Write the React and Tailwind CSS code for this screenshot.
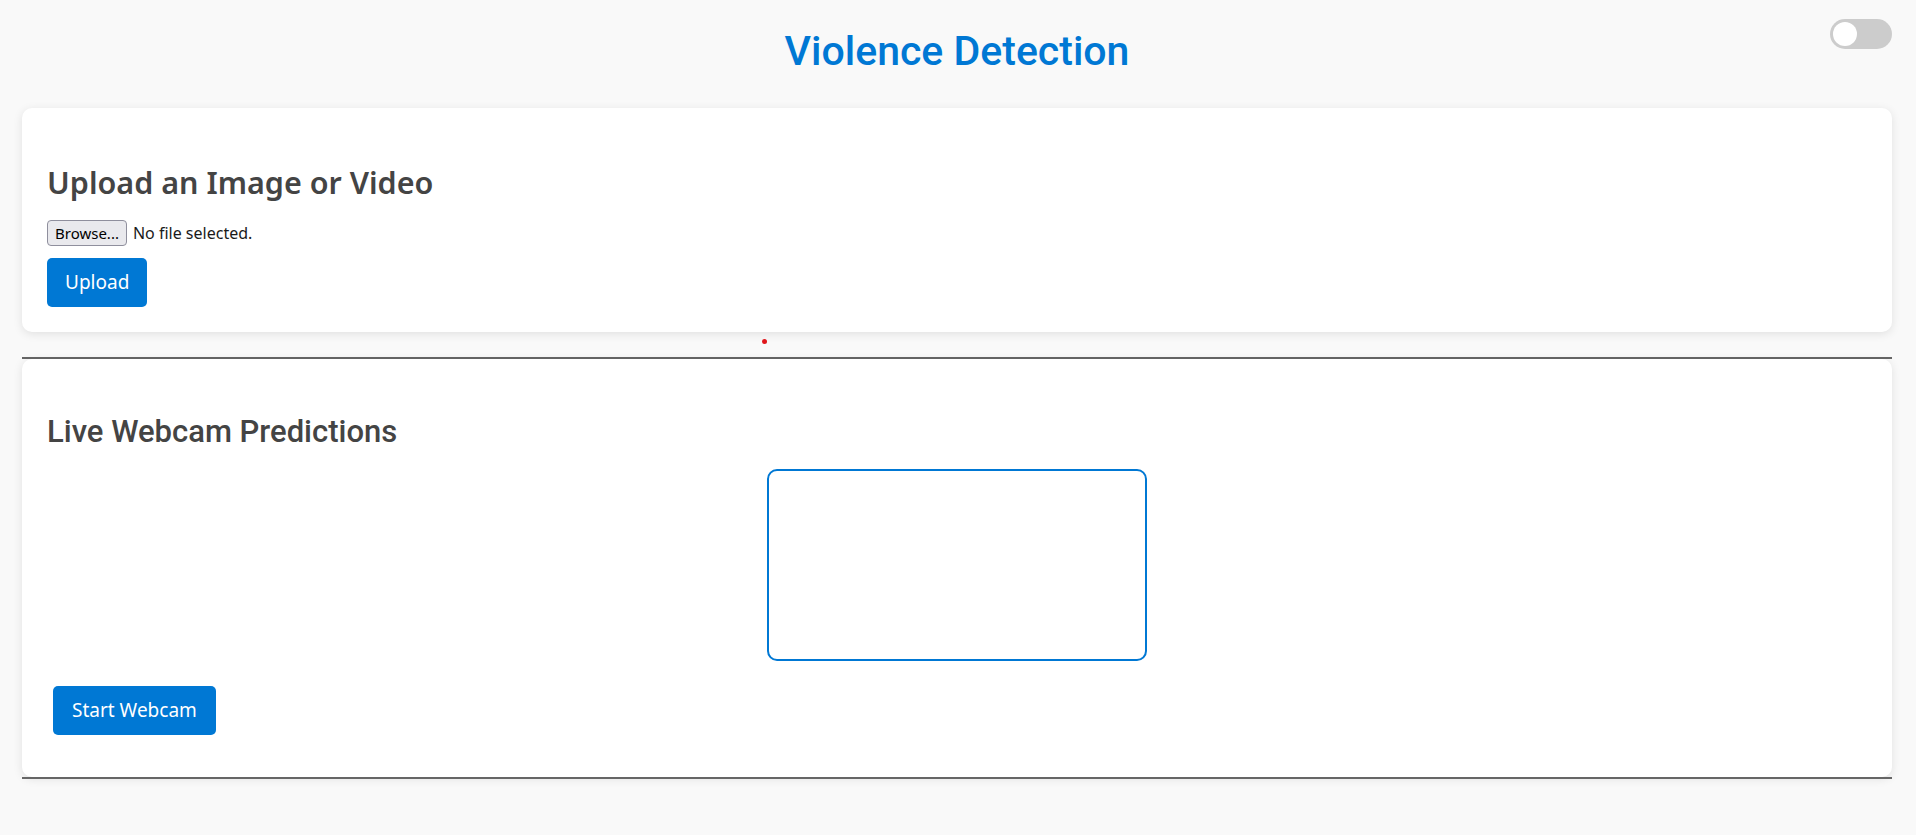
import React from 'react';

const Toggle = () => {
    const [on, setOn] = React.useState(false);
    return (
        <button
            onClick={() => setOn(!on)}
            className={`relative w-[62px] h-[30px] rounded-full transition-colors ${on ? 'bg-[#0078d4]' : 'bg-[#cccccc]'}`}
        >
            <span
                className={`absolute top-[3px] left-[3px] w-[24px] h-[24px] rounded-full bg-white transition-transform ${on ? 'translate-x-[32px]' : ''}`}
            />
        </button>
    );
};

const App = () => {
    return (
        <div className="min-h-screen bg-[#f9f9f9] pt-[19px] font-['Roboto',sans-serif]">
            {/* Header */}
            <div className="grid grid-cols-[1fr_auto_1fr] items-start pl-[22px] pr-[24px]">
                <div />
                <h1 className="mt-[8px] text-[41px] leading-[48px] font-medium text-[#0078d4]">
                    Violence Detection
                </h1>
                <div className="flex justify-end">
                    <Toggle />
                </div>
            </div>

            {/* Upload card */}
            <div className="ml-[22px] mr-[24px] mt-[33px] rounded-[10px] bg-white shadow-[0_2px_10px_rgba(0,0,0,0.1)] px-[25px] pt-[56px] pb-[25px]">
                <h2 className="font-['Noto_Sans',sans-serif] text-[30.5px] leading-[36px] font-semibold text-[#444444]">
                    Upload an Image or Video
                </h2>
                <div className="mt-[20px] flex items-center gap-[6px] h-[26px] font-['Noto_Sans',sans-serif] text-[#1a1a1a]">
                    <button className="h-[26px] px-[7px] rounded-[4px] border border-[#8f8f9d] bg-[#e9e9ed] text-black text-[15px] leading-none">
                        Browse...
                    </button>
                    <span className="text-[16px]">No file selected.</span>
                </div>
                <button className="mt-[12px] h-[49px] px-[18px] rounded-[5px] bg-[#0078d4] text-white font-['Noto_Sans',sans-serif] text-[19px]">
                    Upload
                </button>
            </div>

            {/* Status indicator */}
            <div className="h-[25px] pt-[7px]">
                <div className="ml-[762px] w-[5px] h-[5px] rounded-full bg-[#e0161b]" />
            </div>

            <div className="ml-[22px] mr-[24px] h-[2px] bg-[#666666]" />

            {/* Webcam card */}
            <div className="ml-[22px] mr-[24px] rounded-[10px] bg-white shadow-[0_2px_10px_rgba(0,0,0,0.1)] px-[25px] pt-[55px] pb-[42px]">
                <h2 className="text-[31px] leading-[36px] font-medium text-[#444444]">Live Webcam Predictions</h2>
                <div className="mx-auto mt-[19px] w-[380px] h-[192px] rounded-[10px] border-2 border-[#0078d4]" />
                <button className="mt-[25px] ml-[6px] h-[49px] px-[19px] rounded-[5px] bg-[#0078d4] text-white font-['Noto_Sans',sans-serif] text-[19px]">
                    Start Webcam
                </button>
            </div>

            <div className="ml-[22px] mr-[24px] h-[2px] bg-[#666666]" />
        </div>
    );
};

export default App;
